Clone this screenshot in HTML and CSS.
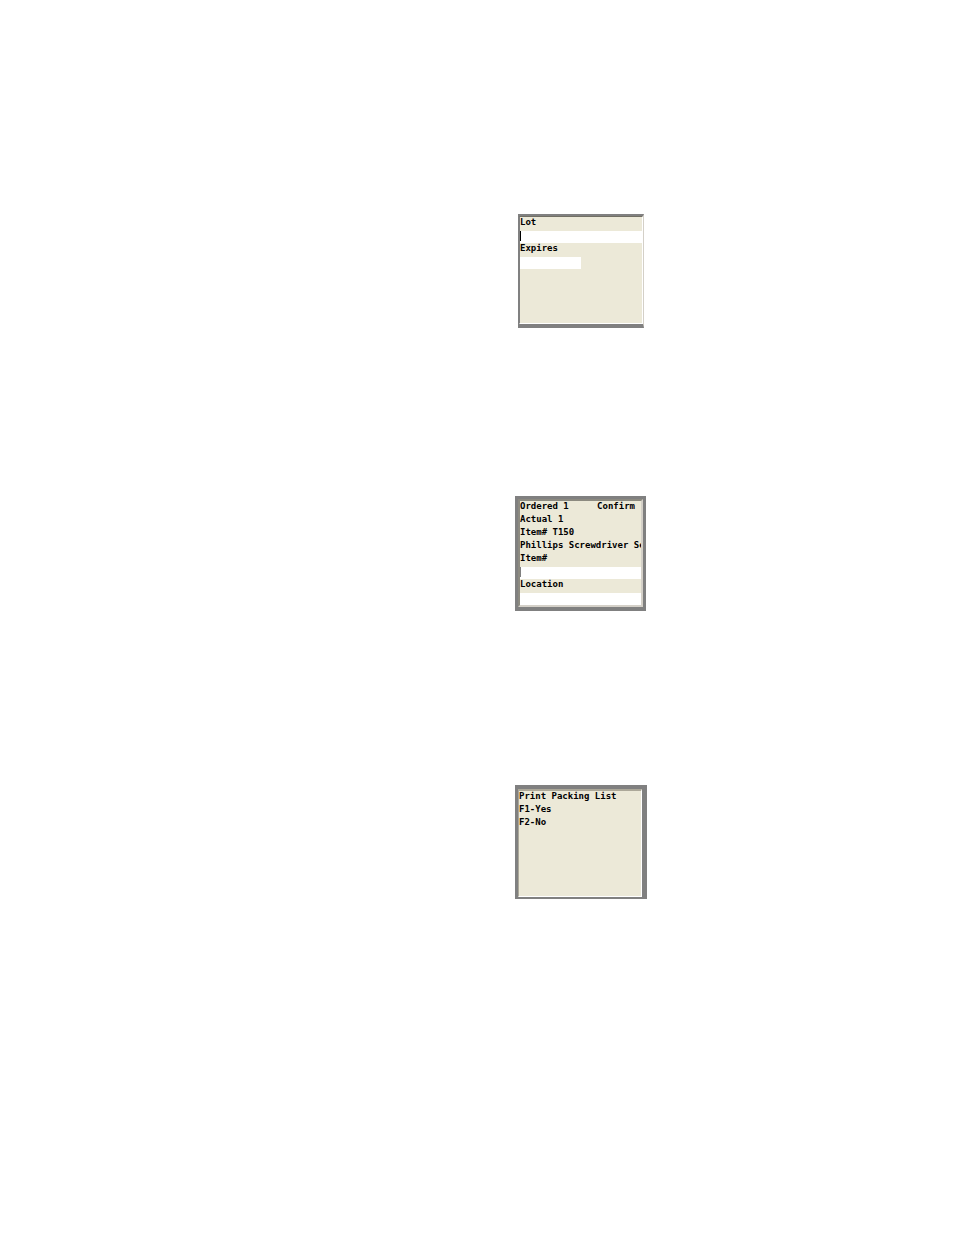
FILE: index.html
```html
<!DOCTYPE html>
<html lang="en">
<head>
<meta charset="utf-8">
<title>Handheld screens</title>
<link rel="stylesheet" href="styles.css">
</head>
<body>
<main class="page">
  <form class="screen screen-lot">
    <div class="display">
      <label class="row" for="lot">Lot</label>
      <div class="field caret"><input id="lot" type="text"></div>
      <label class="row" for="expires">Expires</label>
      <div class="field field-short"><input id="expires" type="text"></div>
    </div>
  </form>
  <form class="screen screen-confirm">
    <div class="display">
      <div class="row row-split"><span>Ordered 1</span><span>Confirm</span></div>
      <div class="row">Actual 1</div>
      <div class="row">Item# T150</div>
      <div class="row">Phillips Screwdriver Set</div>
      <label class="row" for="item">Item#</label>
      <div class="field caret caret-soft"><input id="item" type="text"></div>
      <label class="row" for="location">Location</label>
      <div class="field"><input id="location" type="text"></div>
    </div>
  </form>
  <section class="screen screen-print">
    <div class="display">
      <div class="row">Print Packing List</div>
      <div class="row">F1-Yes</div>
      <div class="row">F2-No</div>
    </div>
  </section>
</main>
</body>
</html>
```
FILE: styles.css
```css
* {
  box-sizing: border-box;
}

body {
  margin: 0;
  background: #fff;
  color: #000;
  font: bold 9px/10px "DejaVu Sans Mono", monospace;
}

.page {
  display: grid;
  grid-template-columns: 515fr 439fr;
  align-content: start;
  justify-items: start;
  min-height: 100vh;
  padding: 214px 0 48px;
}

.screen {
  grid-column: 2;
  border: solid #808080;
}

.display {
  min-height: 108px;
  overflow: hidden;
  border: solid;
  background: #ece9d8;
}

.screen-lot {
  width: 126px;
  margin: 0 0 168px 3px;
  border-width: 2px 1px 4px 1px;
  border-right-color: #d4d0c8;
}

.screen-lot .display {
  border-width: 1px;
  border-color: #716f64 #fff #fff #808080;
}

.screen-confirm {
  width: 131px;
  margin-bottom: 174px;
  border-width: 3px 3px 4px 3px;
}

.screen-confirm .display {
  border-width: 2px;
  border-color: #8c8a80 #d4d0c8 #d4d0c8 #8c8a80;
}

.screen-print {
  width: 132px;
  border-width: 4px 5px 2px 3px;
}

.screen-print .display {
  border-width: 2px 1px 1px 1px;
  border-color: #aca899 #fff #fff #aca899;
}

.row {
  display: block;
  height: 13px;
  white-space: nowrap;
}

.row-split {
  display: flex;
  justify-content: space-between;
  padding-right: 6px;
}

.field {
  position: relative;
  height: 13px;
  padding-top: 1px;
}

.field input {
  display: block;
  width: 100%;
  height: 100%;
  padding: 0 1px;
  border: 0;
  outline: 0;
  border-radius: 0;
  background: #fff;
  font: inherit;
}

.field-short {
  width: 50%;
}

.caret::before {
  content: "";
  position: absolute;
  top: 1px;
  left: 0;
  width: 1px;
  height: 10px;
  background: #000;
}

.caret-soft::before {
  background: #808080;
}
```
